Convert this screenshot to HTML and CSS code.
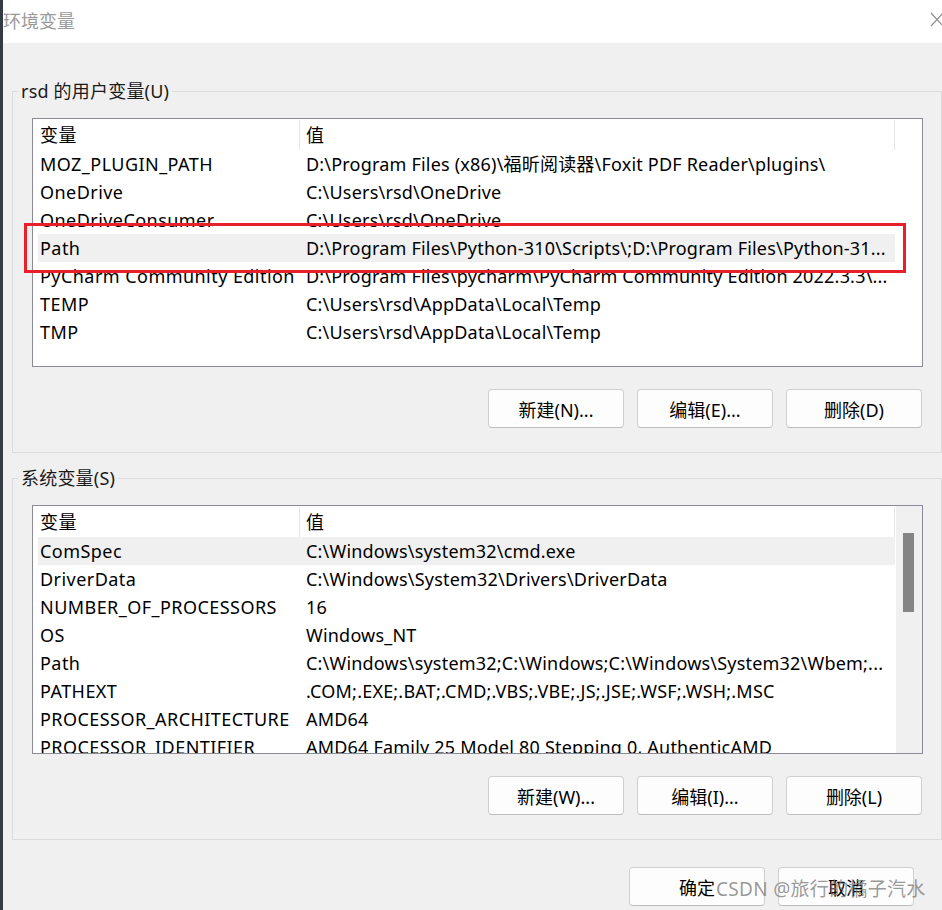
FILE: index.html
```html
<!DOCTYPE html>
<html lang="zh-CN">
<head>
<meta charset="utf-8">
<title>环境变量</title>
<link rel="stylesheet" href="styles.css">
</head>
<body>
<div class="window">
  <div class="titlebar">
    <span class="title">环境变量</span>
    <svg class="close" width="14" height="15" viewBox="0 0 14 15"><path d="M1 1 L13 14 M13 1 L1 14" stroke="#8f8f8f" stroke-width="1.2" fill="none"/></svg>
  </div>
  <div class="body">
    <div class="group">
      <span class="legend">rsd 的用户变量(U)</span>
      <div class="list">
        <div class="rows">
          <div class="row head"><span class="name">变量</span><span class="value">值</span></div>
          <div class="row"><span class="name">MOZ_PLUGIN_PATH</span><span class="value">D:\Program Files (x86)\福昕阅读器\Foxit PDF Reader\plugins\</span></div>
          <div class="row"><span class="name">OneDrive</span><span class="value">C:\Users\rsd\OneDrive</span></div>
          <div class="row"><span class="name">OneDriveConsumer</span><span class="value">C:\Users\rsd\OneDrive</span></div>
          <div class="row sel"><span class="name">Path</span><span class="value">D:\Program Files\Python-310\Scripts\;D:\Program Files\Python-31...</span></div>
          <div class="row"><span class="name">PyCharm Community Edition</span><span class="value">D:\Program Files\pycharm\PyCharm Community Edition 2022.3.3\...</span></div>
          <div class="row"><span class="name">TEMP</span><span class="value">C:\Users\rsd\AppData\Local\Temp</span></div>
          <div class="row"><span class="name">TMP</span><span class="value">C:\Users\rsd\AppData\Local\Temp</span></div>
        </div>
      </div>
      <div class="buttons">
        <button class="btn">新建(N)...</button>
        <button class="btn">编辑(E)...</button>
        <button class="btn">删除(D)</button>
      </div>
    </div>

    <div class="group second">
      <span class="legend">系统变量(S)</span>
      <div class="list">
        <div class="rows">
          <div class="row head"><span class="name">变量</span><span class="value">值</span></div>
          <div class="row sel"><span class="name">ComSpec</span><span class="value">C:\Windows\system32\cmd.exe</span></div>
          <div class="row"><span class="name">DriverData</span><span class="value">C:\Windows\System32\Drivers\DriverData</span></div>
          <div class="row"><span class="name">NUMBER_OF_PROCESSORS</span><span class="value">16</span></div>
          <div class="row"><span class="name">OS</span><span class="value">Windows_NT</span></div>
          <div class="row"><span class="name">Path</span><span class="value">C:\Windows\system32;C:\Windows;C:\Windows\System32\Wbem;...</span></div>
          <div class="row"><span class="name">PATHEXT</span><span class="value">.COM;.EXE;.BAT;.CMD;.VBS;.VBE;.JS;.JSE;.WSF;.WSH;.MSC</span></div>
          <div class="row"><span class="name">PROCESSOR_ARCHITECTURE</span><span class="value">AMD64</span></div>
          <div class="row"><span class="name">PROCESSOR_IDENTIFIER</span><span class="value">AMD64 Family 25 Model 80 Stepping 0, AuthenticAMD</span></div>
        </div>
        <div class="scrollbar"><div class="thumb"></div></div>
      </div>
      <div class="buttons">
        <button class="btn">新建(W)...</button>
        <button class="btn">编辑(I)...</button>
        <button class="btn">删除(L)</button>
      </div>
    </div>

    <div class="buttons footer">
      <button class="btn">确定</button>
      <button class="btn">取消</button>
    </div>
  </div>
  <div class="highlight-box"></div>
  <div class="watermark">CSDN @旅行的橘子汽水</div>
</div>
</body>
</html>
```
FILE: styles.css
```css
html, body {
  margin: 0;
  padding: 0;
}
body {
  width: 942px;
  height: 910px;
  overflow: hidden;
}
.window {
  position: relative;
  width: 942px;
  height: 910px;
  box-sizing: border-box;
  border-left: 3px solid #353b42;
  background: #f0f0f0;
  font-family: "Noto Sans", "Noto Sans CJK SC", sans-serif;
  color: #000;
  overflow: hidden;
}
.titlebar {
  height: 43px;
  background: #fff;
  display: flex;
  align-items: center;
  justify-content: space-between;
}
.title {
  font-size: 18px;
  color: #9a9a9a;
  margin-top: -4px;
}
.close {
  margin-right: -2px;
  margin-top: -4px;
}
.body {
  padding: 48px 0 0 9px;
  display: flex;
  flex-direction: column;
}
.group {
  border: 1px solid #dcdcdc;
  padding: 0 18px 24px 19px;
  display: flex;
  flex-direction: column;
}
.group.second {
  margin-top: 25px;
}
.legend {
  align-self: flex-start;
  margin: -13px 0 0 -14px;
  padding: 0 3px;
  background: #f0f0f0;
  font-size: 18px;
  line-height: 24px;
  color: #1a1a1a;
  letter-spacing: 0.2px;
}
.list {
  margin-top: 15px;
  height: 249px;
  box-sizing: border-box;
  border: 1px solid #8a8a99;
  background: #fff;
  display: flex;
  overflow: hidden;
}
.rows {
  margin-left: 5px;
  width: 857px;
  display: flex;
  flex-direction: column;
}
.row {
  display: flex;
  height: 28px;
  line-height: 28px;
  font-size: 18px;
  white-space: nowrap;
  flex-shrink: 0;
}
.row.head {
  height: 31px;
  line-height: 31px;
}
.row.sel {
  background: #f0f0f0;
}
.name {
  width: 260px;
  padding-left: 2px;
  flex-shrink: 0;
  overflow: hidden;
  letter-spacing: 0.45px;
}
.value {
  width: 588px;
  padding-left: 6px;
  overflow: hidden;
  letter-spacing: 0.2px;
}
.row.head .name {
  width: 259px;
  border-right: 1px solid #e5e5e5;
  margin: 1px 0 0;
}
.row.head .value {
  width: 588px;
  border-right: 1px solid #e5e5e5;
  margin-top: 1px;
}
.scrollbar {
  margin-left: 1px;
  width: 26px;
  background: #f0f0f0;
  padding-top: 27px;
  box-sizing: border-box;
}
.thumb {
  margin-left: 7px;
  width: 11px;
  height: 79px;
  background: #858585;
}
.buttons {
  display: flex;
  justify-content: flex-end;
  gap: 13px;
  margin-top: 22px;
  margin-right: 1px;
}
.btn {
  width: 136px;
  height: 39px;
  box-sizing: border-box;
  border: 1px solid #d0d0d0;
  border-bottom-color: #bdbdbd;
  border-radius: 4px;
  background: #fdfdfd;
  font-family: "Noto Sans", "Noto Sans CJK SC", sans-serif;
  font-size: 18px;
  color: #000;
  padding: 0;
}
.buttons.footer {
  margin-top: 27px;
  margin-right: 28px;
}
.highlight-box {
  position: absolute;
  left: 21px;
  top: 223px;
  width: 882px;
  height: 50px;
  box-sizing: border-box;
  border: 3px solid #e8202a;
}
.watermark {
  position: absolute;
  left: 713px;
  top: 876px;
  font-size: 19px;
  line-height: 26px;
  color: rgba(120, 120, 120, 0.75);
  font-family: "Noto Sans", "Noto Sans CJK SC", sans-serif;
  letter-spacing: 0.3px;
}
```
